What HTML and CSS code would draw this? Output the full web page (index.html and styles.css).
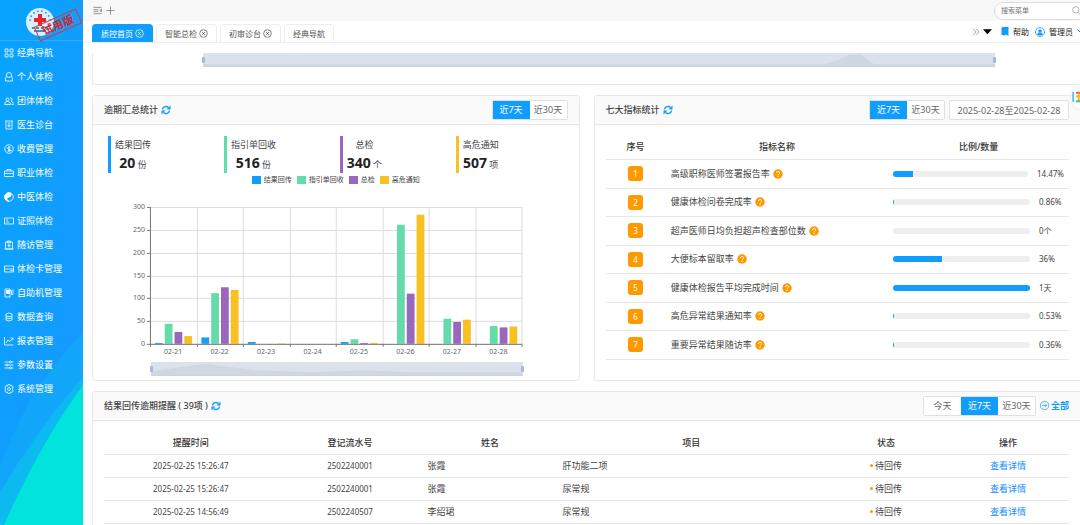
FILE: index.html
```html
<!DOCTYPE html>
<html lang="zh-CN">
  <head>
    <meta charset="UTF-8" />
    <meta name="viewport" content="width=device-width, initial-scale=1.0" />
    <title>质控首页</title>
    <link rel="stylesheet" href="styles.css">
  </head>
  <body>
    <!-- icons -->
    <svg class="sprite" aria-hidden="true">
      <symbol id="i-refresh" viewBox="0 0 20 20"><path d="M3 9a7 7 0 0 1 12-4M17 11a7 7 0 0 1-12 4" fill="none" stroke="currentColor" stroke-width="3"/><path d="M19 1v8h-8zM1 19v-8h8z" fill="currentColor"/></symbol>
      <symbol id="i-close" viewBox="0 0 20 20"><g fill="none" stroke="currentColor" stroke-width="1.6"><circle cx="10" cy="10" r="8.5"/><path d="M6.5 6.5l7 7M13.500 6.500l-7 7"/></g></symbol>
      <symbol id="i-help" viewBox="0 0 20 20"><circle cx="10" cy="10" r="9.500" fill="#ff9900"/><path d="M7 8a3 3 0 1 1 4.500 2.500q-1.500 1-1.500 2.300M10 14v2" fill="none" stroke="#fff" stroke-width="2"/></symbol>
    </svg>

    <aside class="sidebar">
      <svg class="sidebar__wave" viewBox="0 0 83 200" preserveAspectRatio="none">
        <path d="M83 8Q28 62 0 142V200H83z" fill="#12a6fb"/>
        <path d="M83 52Q36 106 0 167V200H83z" fill="#0cb9f0"/>
        <path d="M83 60Q38 122 4 200H83z" fill="#00e4dc"/>
      </svg>
      <div class="logo">
        <svg viewBox="0 0 28 28" width="28" height="28">
          <circle cx="14" cy="14" r="14" fill="#d9effc"/>
          <path d="M4 13a10 10 0 0 1 20 0" fill="none" stroke="#2a9ee0" stroke-width="1.6" stroke-dasharray="1.600 2.600"/>
          <path d="M12 6h4v4h4v4h-4v4h-4v-4H8v-4h4z" fill="#e8232a"/>
          <path d="M6 20h3M10 20h3M15 20h3M19 20h3M8 23h12" stroke="#31658c" stroke-width="1.500"/>
        </svg>
        <span class="logo__stamp">试用版</span>
      </div>
      <nav class="menu">
        <a class="menu__item" href="#"><svg viewBox="0 0 20 20"><path d="M2 2h6v6H2zM12 2h6v6h-6zM2 12h6v6H2zM12 12h6v6h-6z"/></svg>经典导航</a>
        <a class="menu__item" href="#"><svg viewBox="0 0 20 20"><path d="M5 9V6a5 5 0 0 1 10 0v3q3 2 2 9H3q-1-7 2-9q5 4 10 0"/></svg>个人体检</a>
        <a class="menu__item" href="#"><svg viewBox="0 0 20 20"><circle cx="7" cy="7" r="3"/><path d="M1 17q0-6 6-6t6 6zM12 4a3 3 0 1 1 2 6q4 1 5 7h-4"/></svg>团体体检</a>
        <a class="menu__item" href="#"><svg viewBox="0 0 20 20"><path d="M2 2h16M4 2v16h12V2M7 6h6M10 8v7M6.500 11.500h7"/></svg>医生诊台</a>
        <a class="menu__item" href="#"><svg viewBox="0 0 20 20"><circle cx="10" cy="10" r="8.500"/><path d="M13 7q-6-2-6 1t6 4-6 2M10 4v12"/></svg>收费管理</a>
        <a class="menu__item" href="#"><svg viewBox="0 0 20 20"><path d="M1 6h18v11H1zM6 6V3h8v3M1 11h18"/></svg>职业体检</a>
        <a class="menu__item" href="#"><svg viewBox="0 0 20 20"><circle cx="10" cy="10" r="8.500"/><path d="M10 1.500a4.200 4.200 0 0 1 0 8.500 4.200 4.200 0 0 0 0 8.500A8.500 8.500 0 0 1 10 1.500z" fill="#fff"/></svg>中医体检</a>
        <a class="menu__item" href="#"><svg viewBox="0 0 20 20"><path d="M1 4h18v12H1zM4 8h4M4 12h6"/></svg>证照体检</a>
        <a class="menu__item" href="#"><svg viewBox="0 0 20 20"><path d="M3 4h14v14H3zM7 2h6v4H7zM10 8v7M6.500 11.500h7M1 18h18"/></svg>随访管理</a>
        <a class="menu__item" href="#"><svg viewBox="0 0 20 20"><path d="M1 4h18v12H1zM1 10h18M13 13h4"/></svg>体检卡管理</a>
        <a class="menu__item" href="#"><svg viewBox="0 0 20 20"><path d="M2 2h10v16H2zM12 5h3v8h3V3"/><path d="M5 5h6v6H5z" fill="#fff"/></svg>自助机管理</a>
        <a class="menu__item" href="#"><svg viewBox="0 0 20 20"><path d="M4 4q6-4 12 0v12q-6 4-12 0zM4 8q6 3 12 0M4 12q6 3 12 0"/></svg>数据查询</a>
        <a class="menu__item" href="#"><svg viewBox="0 0 20 20"><path d="M1 2v16h18M4 14l4-6 4 3 6-7M13 4h5v4"/></svg>报表管理</a>
        <a class="menu__item" href="#"><svg viewBox="0 0 20 20"><path d="M1 4h10M15 4h4M1 10h3M8 10h11M1 16h10M15 16h4"/><circle cx="13" cy="4" r="2"/><circle cx="6" cy="10" r="2"/><circle cx="13" cy="16" r="2"/></svg>参数设置</a>
        <a class="menu__item" href="#"><svg viewBox="0 0 20 20"><path d="M8 1h4l1 3 3-1 2 3-1 4 1 4-2 3-3-1-1 3H8l-1-3-3 1-2-3 1-4-1-4 2-3 3 1z"/><circle cx="10" cy="10" r="3"/></svg>系统管理</a>
      </nav>
    </aside>

    <div class="page">
      <header class="topbar">
        <svg class="topbar__icon" viewBox="0 0 20 20"><path d="M1 3h18M1 8h11M1 12h11M1 17h18M19 7v6l-4-3z" fill="none" stroke="currentColor" stroke-width="2"/></svg>
        <svg class="topbar__icon" viewBox="0 0 20 20"><path d="M10 1v18M1 10h18" stroke="currentColor" stroke-width="2"/></svg>
        <label class="search">
          <input class="search__input" type="text" placeholder="搜索菜单" aria-label="搜索菜单" />
          <svg viewBox="0 0 20 20" width="9" height="9"><path d="M14 14l5 5" stroke="#aaa" stroke-width="2"/><circle cx="8.500" cy="8.500" r="7" fill="none" stroke="#aaa" stroke-width="2"/></svg>
        </label>
      </header>

      <div class="tabs">
        <button class="tab tab--active">质控首页<svg><use href="#i-close"/></svg></button>
        <button class="tab">智能总检<svg><use href="#i-close"/></svg></button>
        <button class="tab">初审诊台<svg><use href="#i-close"/></svg></button>
        <button class="tab">经典导航</button>
        <div class="tools">
          <svg viewBox="0 0 16 16" width="8" height="8"><path d="M2 1l6 7-6 7M8 1l6 7-6 7" fill="none" stroke="#aaa" stroke-width="2"/></svg>
          <svg class="tools__caret" viewBox="0 0 16 12" width="9" height="7"><path d="M0 2h16L8 11z"/></svg>
          <a class="tools__link" href="#"><svg viewBox="0 0 16 18" width="8" height="9"><path d="M3 0h12v18l-5-3-5 3V16H1V2z" fill="#0f9dff"/></svg>帮助</a>
          <a class="tools__link" href="#"><svg viewBox="0 0 20 20" width="10" height="10"><circle cx="10" cy="10" r="9" fill="none" stroke="#0f9dff" stroke-width="1.500"/><circle cx="10" cy="8" r="3.500" fill="#0f9dff"/><path d="M4 15q1-4 6-4t6 4q-6 4-12 0z" fill="#0f9dff"/></svg>管理员<svg viewBox="0 0 16 10" width="8" height="5"><path d="M1 1l7 7 7-7" fill="none" stroke="#0f9dff" stroke-width="2"/></svg></a>
        </div>
      </div>

      <main class="content">
        <section class="card card--zoom">
          <div class="zoombar">
            <svg viewBox="0 0 792 14" preserveAspectRatio="none"><path d="M0 12H621L634 8 646 2H658L671 12H792V14H0z"/></svg>
          </div>
        </section>

        <div class="row">
          <section class="card">
            <div class="card__head">
              <h2 class="card__title">逾期汇总统计</h2><svg class="refresh"><use href="#i-refresh"/></svg>
              <div class="card__tools">
                <div class="group"><button class="group__btn group__btn--on">近7天</button><button class="group__btn">近30天</button></div>
              </div>
            </div>
            <div class="stats">
              <div class="stat stat--blue"><div><p>结果回传</p><p><b>20</b> 份</p></div></div>
              <div class="stat stat--green"><div><p>指引单回收</p><p><b>516</b> 份</p></div></div>
              <div class="stat stat--purple"><div><p>总检</p><p><b>340</b> 个</p></div></div>
              <div class="stat stat--yellow"><div><p>高危通知</p><p><b>507</b> 项</p></div></div>
            </div>
            <div class="legend">
              <span class="legend__item stat--blue">结果回传</span>
              <span class="legend__item stat--green">指引单回收</span>
              <span class="legend__item stat--purple">总检</span>
              <span class="legend__item stat--yellow">高危通知</span>
            </div>
            <svg class="chart" viewBox="0 0 486 162"></svg>
            <div class="zoombar zoombar--chart">
              <svg viewBox="0 0 372 14" preserveAspectRatio="none"><path d="M0 10L54 2 105 9 160 11 215 9 260 11H372V14H0z"/></svg>
            </div>
          </section>

          <section class="card card--edge">
            <div class="card__head">
              <h2 class="card__title">七大指标统计</h2><svg class="refresh"><use href="#i-refresh"/></svg>
              <div class="card__tools">
                <div class="group"><button class="group__btn group__btn--on">近7天</button><button class="group__btn">近30天</button></div>
                <input class="range" type="text" value="2025-02-28至2025-02-28" aria-label="日期范围" />
              </div>
            </div>
            <table class="table table--kpi">
              <colgroup><col class="w-no" /><col class="w-kpi" /><col class="w-rate" /></colgroup>
              <thead><tr><th>序号</th><th>指标名称</th><th>比例/数量</th></tr></thead>
              <tbody class="kpis"></tbody>
            </table>
          </section>
        </div>

        <section class="card card--edge card--last">
          <div class="card__head">
            <h2 class="card__title">结果回传逾期提醒 ( 39项 )</h2><svg class="refresh"><use href="#i-refresh"/></svg>
            <div class="card__tools">
              <div class="group"><button class="group__btn">今天</button><button class="group__btn group__btn--on">近7天</button><button class="group__btn">近30天</button></div>
              <a class="all" href="#"><svg viewBox="0 0 20 20" width="9" height="9"><g fill="none" stroke="currentColor" stroke-width="1.600"><circle cx="10" cy="10" r="9"/><path d="M5 10h10M11 6l4 4-4 4"/></g></svg>全部</a>
            </div>
          </div>
          <table class="table table--remind">
            <colgroup><col class="w-time" /><col class="w-serial" /><col class="w-name" /><col class="w-item" /><col class="w-state" /><col class="w-act" /></colgroup>
            <thead><tr><th>提醒时间</th><th>登记流水号</th><th>姓名</th><th>项目</th><th>状态</th><th>操作</th></tr></thead>
            <tbody>
              <tr><td class="num">2025-02-25 15:26:47</td><td class="num">2502240001</td><td class="left">张霞</td><td class="left">肝功能二项</td><td><i class="dot"></i>待回传</td><td><a href="#">查看详情</a></td></tr>
              <tr><td class="num">2025-02-25 15:26:47</td><td class="num">2502240001</td><td class="left">张霞</td><td class="left">尿常规</td><td><i class="dot"></i>待回传</td><td><a href="#">查看详情</a></td></tr>
              <tr><td class="num">2025-02-25 14:56:49</td><td class="num">2502240507</td><td class="left">李绍珺</td><td class="left">尿常规</td><td><i class="dot"></i>待回传</td><td><a href="#">查看详情</a></td></tr>
            </tbody>
          </table>
        </section>
      </main>

      <button class="float" aria-label="工具">
        <svg viewBox="0 0 20 20" width="14" height="14"><path d="M3 3v14" stroke="#26b4e8" stroke-width="2"/><path d="M7 4h8" stroke="#f06a3c" stroke-width="3"/><path d="M7 9h8M11 6v9" stroke="#f5b921" stroke-width="3"/><path d="M7 16h8" stroke="#4cc38a" stroke-width="3"/></svg>
      </button>
    </div>

    <script src="main.js"></script>
  </body>
</html>
```
FILE: styles.css
```css
* {
  margin: 0;
  padding: 0;
  box-sizing: border-box;
}

body {
  font-family: 'Noto Sans', 'Noto Sans CJK SC', sans-serif;
  font-size: 9px;
  line-height: 12px;
  color: #444;
  background-color: #fff;
  height: 100vh;
  overflow: hidden;
  display: flex;
}

button,
input {
  font: inherit;
  color: inherit;
}

a {
  color: #0f8cff;
  text-decoration: none;
}

svg {
  flex: none;
}

.sprite {
  position: absolute;
  width: 0;
  height: 0;
}

/* sidebar */
.sidebar {
  position: relative;
  flex: none;
  width: 83px;
  background: linear-gradient(100deg, #06a4ff, #1a97ff);
}

.sidebar__wave {
  position: absolute;
  left: 0;
  bottom: 0;
  width: 100%;
  height: 200px;
}

.logo {
  position: relative;
  height: 41px;
  padding: 8px 0 0 26px;
  border-bottom: 1px solid #36acff;
}

.logo__stamp {
  position: absolute;
  left: 35px;
  top: 17px;
  width: 46px;
  border: 1px solid #c8404a;
  color: #d3262c;
  font-size: 11px;
  font-weight: 700;
  line-height: 14px;
  text-align: center;
  transform: rotate(-24deg);
}

.menu {
  position: relative;
}

.menu__item {
  display: flex;
  align-items: center;
  gap: 3px;
  height: 24px;
  padding-left: 4px;
  color: #fff;
}

.menu__item svg {
  width: 10px;
  height: 10px;
  fill: none;
  stroke: #fff;
  stroke-width: 1.6;
}

/* top */
.page {
  position: relative;
  flex: 1;
  min-width: 0;
  display: flex;
  flex-direction: column;
  overflow: hidden;
}

.topbar {
  flex: none;
  display: flex;
  align-items: center;
  gap: 4px;
  height: 21px;
  padding-left: 10px;
  background-color: #f8f8f8;
  color: #888;
}

.topbar__icon {
  width: 9px;
  height: 9px;
}

.search {
  display: flex;
  align-items: center;
  width: 98px;
  height: 18px;
  margin: 0 -12px 0 auto;
  padding: 0 10px 0 6px;
  border: 1px solid #ddd;
  border-radius: 9px;
  background-color: #fff;
}

.search__input {
  flex: 1;
  min-width: 0;
  border: none;
  outline: none;
  background: none;
  font-size: 7px;
}

.search__input::placeholder {
  color: #777;
}

.tabs {
  flex: none;
  display: flex;
  align-items: flex-end;
  gap: 3px;
  height: 22px;
  padding-left: 9px;
  border-bottom: 1px solid #eee;
  font-size: 8px;
}

.tab {
  display: flex;
  align-items: center;
  gap: 2px;
  height: 18px;
  padding: 0 8px;
  border: 1px solid #eee;
  border-bottom: none;
  border-radius: 4px 4px 0 0;
  background-color: #fff;
  color: #555;
}

.tab svg {
  width: 9px;
  height: 9px;
}

.tab--active {
  border-color: #0f9dff;
  background-color: #0f9dff;
  color: #fff;
}

.tools {
  display: flex;
  align-items: center;
  align-self: center;
  margin: 0 -6px 0 auto;
}

.tools__caret {
  margin: 0 9px 0 3px;
}

.tools__link {
  display: flex;
  align-items: center;
  gap: 4px;
  margin-right: 1px;
  color: #222;
}

.tools__link + .tools__link {
  margin-left: 5px;
}

/* content */
.content {
  flex: 1;
  min-height: 0;
  display: flex;
  flex-direction: column;
  gap: 10px;
  padding: 10px 0 0 9px;
}

.row {
  flex: none;
  display: flex;
  gap: 14px;
}

.row .card {
  flex: 1;
  min-width: 0;
}

.card {
  border: 1px solid #e8e8e8;
  border-radius: 3px;
  background-color: #fff;
}

.card--edge {
  border-right: none;
  border-radius: 3px 0 0 3px;
}

.card--zoom {
  flex: none;
  height: 32px;
  padding: 0 85px 0 110px;
  border-top: none;
  border-right: none;
  border-radius: 0 0 0 3px;
}

.card--last {
  flex: 1;
  border-bottom: none;
  border-radius: 3px 0 0 0;
}

.card__head {
  display: flex;
  align-items: center;
  height: 29px;
  padding: 0 11px;
  border-bottom: 1px solid #e8e8e8;
  background-color: #fafafa;
}

.card__title {
  font-size: 9px;
  font-weight: 500;
}

.refresh {
  width: 10px;
  height: 10px;
  margin-left: 3px;
  color: #0f9dff;
}

.card__tools {
  display: flex;
  align-items: center;
  gap: 4px;
  margin-left: auto;
}

.group {
  display: flex;
  border: 1px solid #e0e0e0;
  border-radius: 2px;
}

.group__btn {
  width: 37px;
  height: 18px;
  border: none;
  background-color: #fff;
  color: #666;
}

.group__btn--on {
  background-color: #0f9dff;
  color: #fff;
}

.range {
  width: 120px;
  height: 20px;
  border: 1px solid #e0e0e0;
  border-radius: 2px;
  background-color: #fff;
  color: #666;
  text-align: center;
}

.all {
  display: flex;
  align-items: center;
  gap: 2px;
  color: #0f9dff;
  font-weight: 700;
}

/* range slider under a chart */
.zoombar {
  position: relative;
  height: 14px;
  border-bottom: 1px solid #ccd3dd;
  background-color: #dbe2ec;
}

.zoombar svg {
  display: block;
  width: 100%;
  height: 13px;
  fill: #cfd7e1;
}

.zoombar::before,
.zoombar::after {
  content: '';
  position: absolute;
  top: 4px;
  left: -1px;
  width: 3px;
  height: 6px;
  border-radius: 1px;
  background-color: #a9bad1;
}

.zoombar::after {
  left: auto;
  right: -1px;
}

.zoombar--chart {
  margin: 0 56px 4px 58px;
}

/* stats */
.stat--blue {
  --tone: #0f9dff;
}

.stat--green {
  --tone: #64dbaa;
}

.stat--purple {
  --tone: #9b66bd;
}

.stat--yellow {
  --tone: #f8c121;
}

.stats {
  display: flex;
  padding: 11px 7px 0 15px;
}

.stat {
  flex: 1;
  display: flex;
  height: 37px;
  padding-left: 4px;
  border-left: 3px solid var(--tone);
  text-align: center;
}

.stat p {
  line-height: 18px;
}

.stat b {
  font-size: 14px;
  color: #222;
}

.legend {
  display: flex;
  justify-content: center;
  gap: 5px;
  padding-top: 1px;
  font-size: 7px;
}

.legend__item {
  display: flex;
  align-items: center;
  gap: 3px;
}

.legend__item::before {
  content: '';
  width: 9px;
  height: 8px;
  background-color: var(--tone);
}

.chart {
  display: block;
  width: 100%;
  font-size: 7px;
  margin: 1px 0 13px;
  overflow: visible;
}

.chart text {
  fill: #666;
}

.chart .grid {
  stroke: #ddd;
}

.chart .axis {
  stroke: #777;
}

/* tables */
.table {
  width: calc(100% - 22px);
  margin: 11px 11px 0;
  table-layout: fixed;
  border-collapse: collapse;
  text-align: center;
}

.table th {
  font-weight: 500;
  color: #333;
}

.table th,
.table td {
  height: 23px;
  padding: 0 5px;
  border-bottom: 1px solid #e8e8e8;
}

.table .left {
  text-align: left;
}

.table .num {
  font-size: 8px;
}

.table--kpi td {
  height: 29px;
}

.table--kpi tr:nth-child(even) td {
  height: 28px;
}

.w-no {
  width: 13%;
}

.w-kpi {
  width: 48%;
}

.w-time {
  width: 18%;
}

.w-serial {
  width: 15%;
}

.w-name {
  width: 14%;
}

.w-state,
.w-act {
  width: 122px;
}

.badge {
  display: block;
  width: 15px;
  margin: 0 auto;
  border-radius: 3px;
  background-color: #ff9900;
  color: #fff;
  font-size: 8px;
  line-height: 15px;
}

.kpi {
  display: flex;
  align-items: center;
  gap: 3px;
}

.kpi svg {
  width: 10px;
  height: 10px;
}

.rate {
  display: flex;
  align-items: center;
  gap: 9px;
}

.rate__track {
  flex: 1;
  height: 6px;
  border-radius: 3px;
  background-color: #eee;
  overflow: hidden;
}

.rate__bar {
  height: 100%;
  background-color: #0f9dff;
}

.rate__value {
  min-width: 25px;
  font-size: 8px;
  text-align: left;
}

.dot {
  display: inline-block;
  width: 3px;
  height: 3px;
  margin-right: 2px;
  border-radius: 50%;
  background-color: #ff9900;
  vertical-align: 2px;
}

/* floating button on the window edge */
.float {
  position: absolute;
  top: 87px;
  right: -13px;
  width: 22px;
  height: 22px;
  border: none;
  border-radius: 50%;
  background-color: #fff;
  box-shadow: 0 0 3px rgba(0, 0, 0, 0.1);
  text-align: left;
}
```
FILE: main.js
```javascript
'use strict';

const days = [
  ['02-21', 2, 44, 26, 17],
  ['02-22', 14, 111, 124, 118],
  ['02-23', 4, 0, 0, 1],
  ['02-24', 0, 0, 0, 0],
  ['02-25', 4, 10, 2, 2],
  ['02-26', 0, 261, 110, 283],
  ['02-27', 0, 55, 48, 53],
  ['02-28', 0, 39, 36, 38],
];
const colors = ['#0f9dff', '#64dbaa', '#9b66bd', '#f8c121'];

const kpis = [
  ['高级职称医师签署报告率', 14.47, '14.47%'],
  ['健康体检问卷完成率', 0.86, '0.86%'],
  ['超声医师日均负担超声检查部位数', 0, '0个'],
  ['大便标本留取率', 36, '36%'],
  ['健康体检报告平均完成时间', 100, '1天'],
  ['高危异常结果通知率', 0.53, '0.53%'],
  ['重要异常结果随访率', 0.36, '0.36%'],
];

// bar chart
const renderChart = function () {
  const left = 57;
  const right = 429;
  const top = 20;
  const bottom = 157;
  const step = (right - left) / days.length;
  let html = '';

  for (let v = 0; v <= 300; v += 50) {
    const y = Math.round(bottom - (v / 300) * (bottom - top)) + 0.5;
    html += `<path class="grid" d="M${left} ${y}H${right}"/>
      <path class="axis" d="M${left - 3} ${y}H${left}"/>
      <text x="${left - 5}" y="${y + 2}" text-anchor="end">${v}</text>`;
  }
  for (let i = 0; i <= days.length; i++) {
    const x = Math.round(left + i * step) + 0.5;
    html += `<path class="grid" d="M${x} ${top}V${bottom}"/>
      <path class="axis" d="M${x} ${bottom}v3"/>`;
  }
  days.forEach(([day, ...values], i) => {
    const x = left + i * step;
    values.forEach((v, j) => {
      const h = (v / 300) * (bottom - top);
      html += `<rect x="${x + 5 + j * 9.8}" y="${bottom - h}" width="7.8" height="${h}" fill="${colors[j]}"/>`;
    });
    html += `<text x="${x + step / 2}" y="${bottom + 10}" text-anchor="middle">${day}</text>`;
  });
  html += `<path class="axis" fill="none" d="M${left + 0.5} ${top}V${bottom + 0.5}H${right}"/>`;

  document.querySelector('.chart').innerHTML = html;
};

const renderKpis = function () {
  document.querySelector('.kpis').innerHTML = kpis
    .map(
      ([name, rate, value], i) => `<tr>
        <td><span class="badge">${i + 1}</span></td>
        <td><div class="kpi">${name}<svg><use href="#i-help"/></svg></div></td>
        <td><div class="rate">
          <div class="rate__track"><div class="rate__bar" style="width: ${rate}%"></div></div>
          <span class="rate__value">${value}</span>
        </div></td>
      </tr>`
    )
    .join('');
};

renderChart();
renderKpis();
```
